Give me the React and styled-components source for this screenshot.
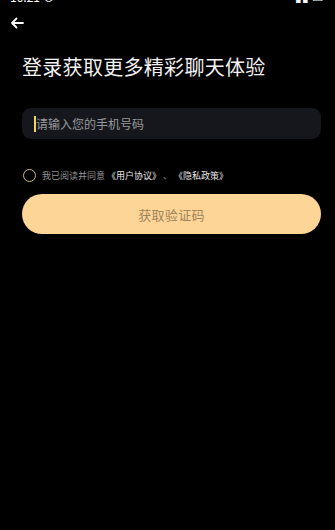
import React from 'react';
import styled, { createGlobalStyle } from 'styled-components';

const GlobalStyle = createGlobalStyle`
  html, body {
    margin: 0;
    padding: 0;
    background: #000;
  }
  body {
    font-family: "Noto Sans CJK SC", "Noto Sans", sans-serif;
  }
`;

const Page = styled.div`
  width: 335px;
  height: 530px;
  background: #000;
  color: #fff;
  overflow: hidden;
`;

// status bar is scrolled mostly out of view in the shot, only the glyph bottoms show
const StatusBar = styled.div`
  height: 3px;
  overflow: hidden;
  display: flex;
  align-items: flex-end;
  justify-content: space-between;
  padding: 0 12px 0 10px;
  font-size: 12px;
  line-height: 12px;
  color: #fff;
`;

const TopBar = styled.div`
  height: 40px;
  display: flex;
  align-items: center;
  padding-left: 9px;
`;

const BackButton = styled.div`
  width: 16px;
  height: 16px;
  display: flex;
  align-items: center;
  justify-content: center;
`;

const Content = styled.div`
  padding: 10px 14px 0 22px;
  display: flex;
  flex-direction: column;
`;

const Title = styled.h1`
  margin: 0;
  font-size: 20px;
  font-weight: 400;
  line-height: 28px;
  letter-spacing: 0.3px;
  color: #f2f2f2;
`;

const InputBox = styled.div`
  margin-top: 27px;
  height: 31px;
  border-radius: 9px;
  background: #16171c;
  display: flex;
  align-items: center;
  padding-left: 12px;
`;

const Caret = styled.span`
  width: 2px;
  height: 16px;
  background: #f2d35a;
`;

const Placeholder = styled.span`
  font-size: 12px;
  color: #98989b;
`;

const AgreeRow = styled.div`
  margin-top: 30px;
  display: flex;
  align-items: center;
  gap: 6px;
  padding-left: 1px;
`;

const Radio = styled.span`
  width: 11px;
  height: 11px;
  border-radius: 50%;
  border: 1.3px solid #cdb888;
  flex-shrink: 0;
`;

const AgreeText = styled.span`
  font-size: 9px;
  color: #949494;
  white-space: pre;
`;

const Link = styled.span`
  color: #e6e6e6;
`;

const SubmitButton = styled.button`
  margin-top: 12px;
  height: 40px;
  border: none;
  border-radius: 20px;
  background: #fdd596;
  color: #a0845c;
  font-family: inherit;
  font-size: 13px;
  letter-spacing: 0.3px;
  display: flex;
  align-items: center;
  justify-content: center;
`;

export default function App() {
  return (
    <Page>
      <GlobalStyle />
      <StatusBar>
        <span>10:21 ⊙</span>
        <span>▮▮ ▭</span>
      </StatusBar>
      <TopBar>
        <BackButton>
          <svg width="14" height="12" viewBox="0 0 14 12" fill="none">
            <path d="M13 6H2M6.5 1.5L2 6l4.5 4.5" stroke="#fff" strokeWidth="1.8" strokeLinecap="round" strokeLinejoin="round" />
          </svg>
        </BackButton>
      </TopBar>
      <Content>
        <Title>登录获取更多精彩聊天体验</Title>
        <InputBox>
          <Caret />
          <Placeholder>请输入您的手机号码</Placeholder>
        </InputBox>
        <AgreeRow>
          <Radio />
          <AgreeText>
            我已阅读并同意 <Link>《用户协议》</Link> 、 <Link>《隐私政策》</Link>
          </AgreeText>
        </AgreeRow>
        <SubmitButton>获取验证码</SubmitButton>
      </Content>
    </Page>
  );
}
